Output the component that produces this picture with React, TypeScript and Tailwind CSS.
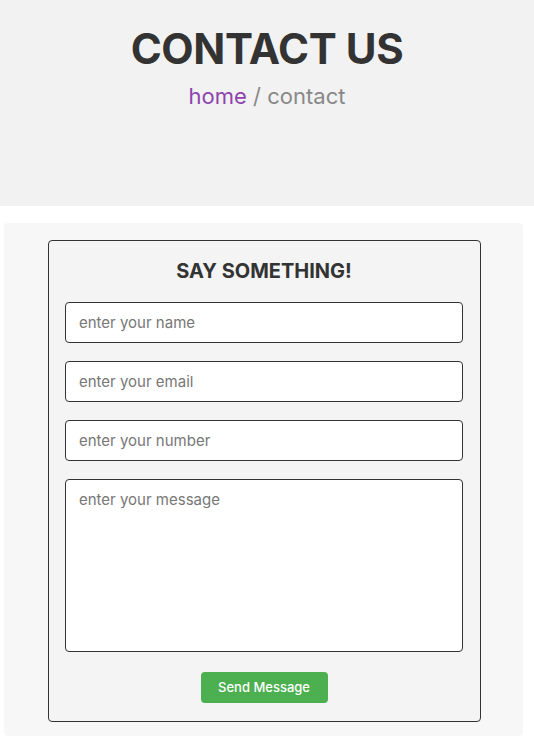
export default function App() {
  return (
    <div className="min-h-[736px] bg-white font-['Inter','Noto_Sans',sans-serif]">
      {/* Page heading */}
      <div className="h-[206px] bg-[#f2f2f2] pt-[25px] text-center">
        <h1 className="text-[42px] leading-[48px] font-bold text-[#333] tracking-[-0.4px]">CONTACT US</h1>
        <p className="mt-[9px] text-[22px] leading-[28px] text-[#888]">
          <span className="text-[#8e44ad]">home</span> / contact
        </p>
      </div>

      {/* Contact form */}
      <div className="mt-[17px] mx-[4px] w-[519px] rounded-[4px] bg-[#f7f7f7] pt-[17px] pb-[14px]">
        <form className="ml-[44px] w-[433px] rounded-[4px] border border-[#333] bg-[#f4f4f4] pl-[16px] pr-[17px] pt-[16px] pb-[18px]">
          <h3 className="text-center text-[20px] leading-[28px] font-bold text-[#333]">SAY SOMETHING!</h3>
          <div className="mt-[17px] flex flex-col gap-[18px]">
            <input
              type="text"
              placeholder="enter your name"
              className="h-[41px] w-full rounded-[4px] border border-[#333] bg-white px-[13px] text-[15px] text-[#333] outline-none placeholder:text-[#777]"
            />
            <input
              type="email"
              placeholder="enter your email"
              className="h-[41px] w-full rounded-[4px] border border-[#333] bg-white px-[13px] text-[15px] text-[#333] outline-none placeholder:text-[#777]"
            />
            <input
              type="text"
              placeholder="enter your number"
              className="h-[41px] w-full rounded-[4px] border border-[#333] bg-white px-[13px] text-[15px] text-[#333] outline-none placeholder:text-[#777]"
            />
            <textarea
              placeholder="enter your message"
              className="block h-[173px] w-full resize-none rounded-[4px] border border-[#333] bg-white px-[13px] py-[9px] text-[15px] text-[#333] outline-none placeholder:text-[#777]"
            />
          </div>
          <div className="mt-[20px] flex justify-center">
            <button
              type="button"
              className="h-[31px] w-[127px] rounded-[4px] bg-[#4caf50] text-[13px] font-medium text-white"
            >
              Send Message
            </button>
          </div>
        </form>
      </div>
    </div>
  )
}
